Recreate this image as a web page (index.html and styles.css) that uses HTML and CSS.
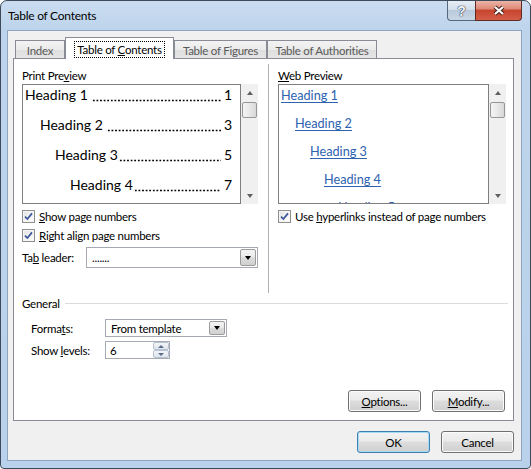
FILE: index.html
```html
<!DOCTYPE html>
<html>
<head>
  <title>Table of Contents</title>
  <meta charset="UTF-8">
  <link rel="stylesheet" href="styles.css">
</head>
<body>
  <div class="window">
    <div class="titlebar">
      <span class="title">Table of Contents</span>
      <div class="caption-buttons">
        <div class="caption-btn help">?</div>
        <div class="caption-btn close">
          <svg width="14" height="11" viewBox="0 0 14 11">
            <path class="x-outline" d="M3 2 L11 9 M11 2 L3 9"/>
            <path class="x-fill" d="M3 2 L11 9 M11 2 L3 9"/>
          </svg>
        </div>
      </div>
    </div>

    <div class="client">
      <div class="tabs">
        <div class="tab tab-index">Index</div>
        <div class="tab tab-toc active"><span class="focus">Table of <u>C</u>ontents</span></div>
        <div class="tab tab-tof">Table of Figures</div>
        <div class="tab tab-toa">Table of Authorities</div>
      </div>

      <div class="panel">
        <div class="previews">
          <!-- Print preview -->
          <div class="col">
            <div class="group-label">Print Pre<u>v</u>iew</div>
            <div class="preview">
              <div class="preview-box print-box">
                <div class="toc-line lvl1"><span>Heading 1</span><span class="leader spaced"></span><span>1</span></div>
                <div class="toc-line lvl2"><span>Heading 2</span><span class="leader spaced"></span><span>3</span></div>
                <div class="toc-line lvl3"><span>Heading 3</span><span class="leader"></span><span>5</span></div>
                <div class="toc-line lvl4"><span>Heading 4</span><span class="leader"></span><span>7</span></div>
              </div>
              <div class="scrollbar">
                <div class="sb-arrow up"></div>
                <div class="sb-thumb"></div>
                <div class="sb-track"></div>
                <div class="sb-arrow down"></div>
              </div>
            </div>
            <div class="check">
              <span class="checkbox"><svg width="9" height="9" viewBox="0 0 9 9"><path d="M1 4.6 L3.4 7 L8 1.4"/></svg></span>
              <span><u>S</u>how page numbers</span>
            </div>
            <div class="check">
              <span class="checkbox"><svg width="9" height="9" viewBox="0 0 9 9"><path d="M1 4.6 L3.4 7 L8 1.4"/></svg></span>
              <span><u>R</u>ight align page numbers</span>
            </div>
            <div class="field-row">
              <span class="field-label leader-label">Ta<u>b</u> leader:</span>
              <div class="combo leader-combo">
                <span class="combo-text">.......</span>
                <span class="combo-btn"></span>
              </div>
            </div>
          </div>

          <div class="divider"></div>

          <!-- Web preview -->
          <div class="col">
            <div class="group-label"><u>W</u>eb Preview</div>
            <div class="preview">
              <div class="preview-box web-box">
                <div class="web-line lvl1"><a href="#">Heading 1</a></div>
                <div class="web-line lvl2"><a href="#">Heading 2</a></div>
                <div class="web-line lvl3"><a href="#">Heading 3</a></div>
                <div class="web-line lvl4"><a href="#">Heading 4</a></div>
                <div class="web-line lvl5"><a href="#">Heading 5</a></div>
              </div>
              <div class="scrollbar">
                <div class="sb-arrow up"></div>
                <div class="sb-thumb"></div>
                <div class="sb-track"></div>
                <div class="sb-arrow down"></div>
              </div>
            </div>
            <div class="check">
              <span class="checkbox"><svg width="9" height="9" viewBox="0 0 9 9"><path d="M1 4.6 L3.4 7 L8 1.4"/></svg></span>
              <span>Use <u>h</u>yperlinks instead of page numbers</span>
            </div>
          </div>
        </div>

        <!-- General -->
        <div class="general">
          <div class="general-head">
            <span>General</span>
            <span class="rule"></span>
          </div>
          <div class="field-row general-row">
            <span class="field-label">Forma<u>t</u>s:</span>
            <div class="combo formats-combo">
              <span class="combo-text">From template</span>
              <span class="combo-btn"></span>
            </div>
          </div>
          <div class="field-row general-row levels-row">
            <span class="field-label">Show <u>l</u>evels:</span>
            <div class="spinner">
              <span class="spin-text">6</span>
              <span class="spin-btns">
                <span class="spin-btn spin-up"></span>
                <span class="spin-btn spin-down"></span>
              </span>
            </div>
          </div>
        </div>

        <div class="panel-buttons">
          <button class="button"><u>O</u>ptions...</button>
          <button class="button"><u>M</u>odify...</button>
        </div>
      </div>

      <div class="dialog-buttons">
        <button class="button default">OK</button>
        <button class="button">Cancel</button>
      </div>
    </div>
  </div>
</body>
</html>
```

FILE: styles.css
```css
body {
  margin: 0;
  font-family: Lato, "Liberation Sans", sans-serif;
  font-size: 11.5px;
  letter-spacing: -0.25px;
  color: #000;
  background: #fff;
}

u {
  text-underline-offset: 1px;
}

.window {
  width: 531px;
  height: 469px;
  box-sizing: border-box;
  display: flex;
  flex-direction: column;
  padding: 0 8px 7px 6px;
  border: 1px solid #3c4a5a;
  border-radius: 7px 7px 4px 4px;
  background: linear-gradient(180deg, #cadcf0 0, #bdd4ec 30px, #b9d1ea 100%);
}

/* title bar */

.titlebar {
  flex: none;
  height: 29px;
  display: flex;
  align-items: flex-start;
}

.title {
  margin: 7px 0 0 1px;
  font-size: 12px;
  line-height: 15px;
}

.caption-buttons {
  margin-left: auto;
  display: flex;
}

.caption-btn {
  height: 20px;
  box-sizing: border-box;
  display: flex;
  align-items: center;
  justify-content: center;
  border: 1px solid #55677e;
  border-top: none;
}

.help {
  width: 28px;
  border-right: none;
  border-radius: 0 0 0 4px;
  background: linear-gradient(180deg, #e6edf5 0, #d3deea 45%, #b9c9dc 50%, #c9d6e5 100%);
  color: #f4f6f8;
  font: bold 14px "Liberation Sans", sans-serif;
  text-shadow: 0 0 1px #2f3b4b, 0 0 1px #2f3b4b, 0 0 1px #2f3b4b;
}

.close {
  width: 47px;
  border-color: #5e2a22;
  border-radius: 0 0 4px 0;
  background: linear-gradient(180deg, #eab5a8 0, #df8b79 40%, #c8452f 50%, #d35d47 100%);
}

.x-outline {
  fill: none;
  stroke: #43201a;
  stroke-width: 4.2;
}

.x-fill {
  fill: none;
  stroke: #fff;
  stroke-width: 2.2;
}

/* client area */

.client {
  flex: 1;
  display: flex;
  flex-direction: column;
  box-sizing: border-box;
  padding: 6px 7px 0 5px;
  background: #f0f0f0;
  border: 1px solid #8ea4c1;
}

.tabs {
  position: relative;
  z-index: 1;
  display: flex;
  align-items: flex-end;
  height: 22px;
  margin-bottom: -1px;
  padding-left: 2px;
}

.tab {
  box-sizing: border-box;
  height: 18px;
  margin-bottom: 1px;
  padding-top: 2px;
  line-height: 15px;
  text-align: center;
  color: #5a5a5a;
  border: 1px solid #898c95;
  border-bottom: none;
  background: linear-gradient(180deg, #f3f3f3 0, #ebebeb 50%, #dedede 51%, #e6e6e6 100%);
}

.tab-index { width: 50px; }
.tab-toc { width: 109px; }
.tab-tof { width: 93px; }
.tab-toa { width: 110px; }

.tab.active {
  height: 22px;
  margin-bottom: 0;
  padding-top: 3px;
  color: #000;
  background: #fff;
}

.focus {
  display: inline-block;
  padding: 0 2px;
  border: 1px dotted #000;
  line-height: 15px;
}

.panel {
  flex: none;
  height: 363px;
  box-sizing: border-box;
  display: flex;
  flex-direction: column;
  padding: 9px 7px 8px 8px;
  background: #fff;
  border: 1px solid #898c95;
}

.previews {
  display: grid;
  grid-template-columns: 236px 20px 228px;
  align-items: start;
}

.group-label {
  line-height: 15px;
  margin-bottom: 1px;
}

.divider {
  width: 1px;
  height: 229px;
  margin: -4px 0 0 10px;
  background: #b0b0b0;
}

.preview {
  display: flex;
  height: 120px;
}

.preview-box {
  flex: 1;
  box-sizing: border-box;
  overflow: hidden;
  display: flex;
  flex-direction: column;
  border: 1px solid #7f7f7f;
  background: #fff;
  letter-spacing: 0;
}

.print-box {
  gap: 10px;
  padding-right: 8px;
  font-size: 14px;
}

.toc-line {
  display: flex;
  line-height: 20px;
  white-space: nowrap;
}

/* dot leader drawn as a row of dots on the baseline */
.leader {
  flex: 1;
  margin-right: 3px;
  background-image: radial-gradient(circle, #000 0.8px, transparent 1.2px);
  background-size: 3.6px 3px;
  background-repeat: repeat-x;
  background-position: 1px 13.5px;
}

.leader.spaced {
  margin-left: 3px;
}

.print-box .lvl1 { padding-left: 2px; }
.print-box .lvl2 { padding-left: 17px; }
.print-box .lvl3 { padding-left: 32px; }
.print-box .lvl4 { padding-left: 47px; }

.web-box {
  gap: 8px;
  font-size: 12.7px;
}

.web-line {
  line-height: 20px;
  white-space: nowrap;
}

.web-line a {
  color: #2d62b0;
  text-underline-offset: 2px;
}

.web-box .lvl1 { padding-left: 2px; }
.web-box .lvl2 { padding-left: 16px; }
.web-box .lvl3 { padding-left: 31px; }
.web-box .lvl4 { padding-left: 45px; }
.web-box .lvl5 { padding-left: 59px; }

.scrollbar {
  width: 17px;
  display: flex;
  flex-direction: column;
  background: #f0f0f0;
}

.sb-arrow {
  height: 17px;
  display: flex;
  align-items: center;
  justify-content: center;
}

.sb-arrow.up::after {
  content: "";
  border-left: 3.5px solid transparent;
  border-right: 3.5px solid transparent;
  border-bottom: 4px solid #606060;
}

.sb-arrow.down::after {
  content: "";
  border-left: 3.5px solid transparent;
  border-right: 3.5px solid transparent;
  border-top: 4px solid #606060;
}

.sb-thumb {
  height: 16px;
  margin: 1px 1px 0;
  box-sizing: border-box;
  border: 1px solid #979797;
  border-radius: 2px;
  background: linear-gradient(90deg, #f5f5f5 0, #e8e8e8 50%, #d8d8d8 100%);
}

.sb-track {
  flex: 1;
}

.check {
  display: flex;
  align-items: center;
  height: 16px;
  margin-top: 4px;
}

.check + .check {
  margin-top: 3px;
}

.checkbox {
  width: 13px;
  height: 13px;
  box-sizing: border-box;
  display: flex;
  align-items: center;
  justify-content: center;
  margin-right: 4px;
  border: 1px solid #8e8f8f;
  background: linear-gradient(135deg, #e2e2e2 0, #f4f4f4 60%, #ffffff 100%);
  box-shadow: inset 0 0 0 1px #f6f6f6;
}

.checkbox path {
  fill: none;
  stroke: #3b5799;
  stroke-width: 1.7;
}

.field-row {
  display: flex;
  align-items: center;
  margin-top: 4px;
}

.leader-label {
  width: 64px;
}

.combo {
  display: flex;
  box-sizing: border-box;
  background: #fff;
  border: 1px solid #a6abb3;
}

.combo-text {
  flex: 1;
  padding-left: 5px;
  align-self: center;
}

.combo-btn {
  width: 16px;
  margin: 1px;
  box-sizing: border-box;
  display: flex;
  align-items: center;
  justify-content: center;
  border: 1px solid #9c9c9c;
  border-radius: 2px;
  background: linear-gradient(180deg, #f4f4f4 0, #ebebeb 45%, #dcdcdc 50%, #d0d0d0 100%);
}

.combo-btn::after {
  content: "";
  border-left: 3.5px solid transparent;
  border-right: 3.5px solid transparent;
  border-top: 4px solid #000;
}

.leader-combo {
  width: 172px;
  height: 21px;
}

/* general section */

.general {
  margin-top: 3px;
}

.general-head {
  display: flex;
  align-items: center;
  line-height: 15px;
}

.rule {
  flex: 1;
  height: 1px;
  margin: 0 -2px 0 5px;
  background: #dcdcdc;
}

.general-row {
  padding-left: 9px;
  margin-top: 8px;
}

.general-row .field-label {
  width: 74px;
}

.levels-row {
  margin-top: 4px;
}

.formats-combo {
  width: 122px;
  height: 18px;
}

.spinner {
  display: flex;
  width: 65px;
  height: 18px;
  box-sizing: border-box;
  background: #fff;
  border: 1px solid #a6abb3;
}

.spin-text {
  flex: 1;
  padding-left: 4px;
  align-self: center;
}

.spin-btns {
  width: 16px;
  display: flex;
  flex-direction: column;
}

.spin-btn {
  flex: 1;
  display: flex;
  align-items: center;
  justify-content: center;
  border: 1px solid #b6c2d2;
  border-radius: 2px;
  background: linear-gradient(180deg, #f3f5f8 0, #dfe5ec 100%);
}

.spin-up::after {
  content: "";
  border-left: 3px solid transparent;
  border-right: 3px solid transparent;
  border-bottom: 3px solid #5b6f8c;
}

.spin-down::after {
  content: "";
  border-left: 3px solid transparent;
  border-right: 3px solid transparent;
  border-top: 3px solid #5b6f8c;
}

/* buttons */

.panel-buttons,
.dialog-buttons {
  display: flex;
  justify-content: flex-end;
  gap: 11px;
}

.panel-buttons {
  margin: auto 1px 0 0;
}

.dialog-buttons {
  margin-top: 10px;
}

.button {
  width: 73px;
  height: 22px;
  padding: 0;
  box-sizing: border-box;
  font: inherit;
  letter-spacing: inherit;
  color: #000;
  border: 1px solid #707070;
  border-radius: 3px;
  background: linear-gradient(180deg, #f2f2f2 0, #ebebeb 45%, #dddddd 50%, #cfcfcf 100%);
  box-shadow: inset 0 0 0 1px #fbfbfb;
}

.button.default {
  border-color: #3c7fb1;
  box-shadow: inset 0 0 0 1px #a9daf4;
}
```
